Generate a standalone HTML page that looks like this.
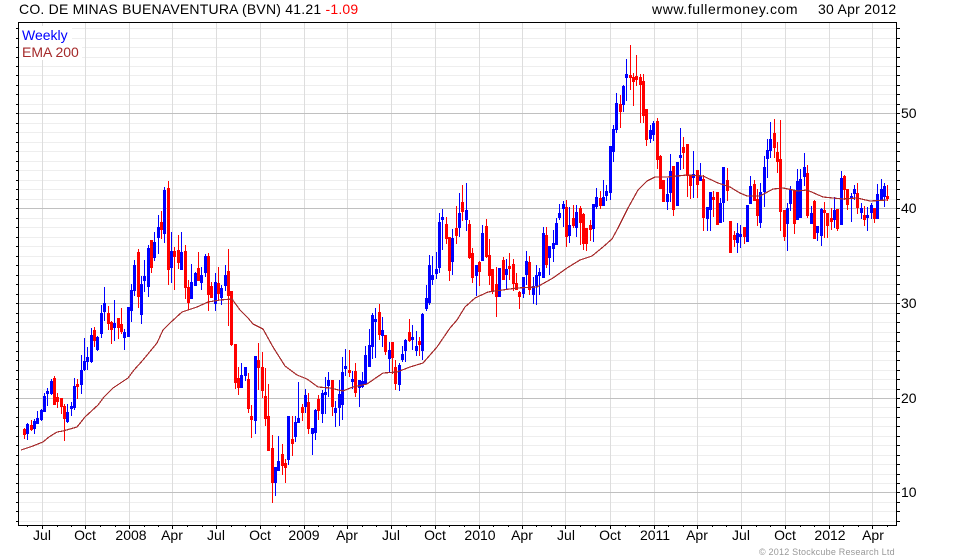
<!DOCTYPE html>
<html><head><meta charset="utf-8"><title>BVN chart</title>
<style>html,body{margin:0;padding:0;background:#fff}svg{display:block}text{font-family:"Liberation Sans",sans-serif;font-size:14px;fill:#000}</style>
</head><body>
<svg width="980" height="560" viewBox="0 0 980 560" xmlns="http://www.w3.org/2000/svg">
<g shape-rendering="crispEdges" fill="none">
<path stroke="#eeeeee" d="M19 28.5H896M19 38.5H896M19 47.5H896M19 57.5H896M19 66.5H896M19 75.5H896M19 85.5H896M19 94.5H896M19 104.5H896M19 123.5H896M19 132.5H896M19 142.5H896M19 151.5H896M19 161.5H896M19 170.5H896M19 180.5H896M19 189.5H896M19 199.5H896M19 218.5H896M19 227.5H896M19 237.5H896M19 246.5H896M19 256.5H896M19 265.5H896M19 275.5H896M19 284.5H896M19 294.5H896M19 313.5H896M19 322.5H896M19 332.5H896M19 341.5H896M19 351.5H896M19 360.5H896M19 370.5H896M19 379.5H896M19 389.5H896M19 407.5H896M19 417.5H896M19 426.5H896M19 436.5H896M19 445.5H896M19 455.5H896M19 464.5H896M19 474.5H896M19 483.5H896M19 502.5H896M19 511.5H896M19 521.5H896"/>
<path stroke="#dddddd" d="M42.5 23V525M85.5 23V525M129.5 23V525M172.5 23V525M216.5 23V525M260.5 23V525M304.5 23V525M347.5 23V525M391.5 23V525M435.5 23V525M479.5 23V525M522.5 23V525M565.5 23V525M610.5 23V525M654.5 23V525M697.5 23V525M741.5 23V525M785.5 23V525M829.5 23V525M872.5 23V525"/>
<path stroke="#c0c0c0" d="M19 113.5H896M19 208.5H896M19 303.5H896M19 398.5H896M19 492.5H896"/>
<rect x="20" y="26" width="52" height="17" fill="#fff"/>
<rect x="20" y="43" width="62" height="17" fill="#fff"/>
<path stroke="#000" stroke-width="1" d="M16 28.5h3M16 38.5h3M16 47.5h3M16 57.5h3M16 66.5h3M16 75.5h3M16 85.5h3M16 94.5h3M16 104.5h3M16 113.5h3M16 123.5h3M16 132.5h3M16 142.5h3M16 151.5h3M16 161.5h3M16 170.5h3M16 180.5h3M16 189.5h3M16 199.5h3M16 208.5h3M16 218.5h3M16 227.5h3M16 237.5h3M16 246.5h3M16 256.5h3M16 265.5h3M16 275.5h3M16 284.5h3M16 294.5h3M16 303.5h3M16 313.5h3M16 322.5h3M16 332.5h3M16 341.5h3M16 351.5h3M16 360.5h3M16 370.5h3M16 379.5h3M16 389.5h3M16 398.5h3M16 407.5h3M16 417.5h3M16 426.5h3M16 436.5h3M16 445.5h3M16 455.5h3M16 464.5h3M16 474.5h3M16 483.5h3M16 492.5h3M16 502.5h3M16 511.5h3M16 521.5h3"/>
<path stroke="#000" stroke-width="1" d="M896 28.5h4M896 38.5h4M896 47.5h4M896 57.5h4M896 66.5h4M896 75.5h4M896 85.5h4M896 94.5h4M896 104.5h4M896 113.5h4M896 123.5h4M896 132.5h4M896 142.5h4M896 151.5h4M896 161.5h4M896 170.5h4M896 180.5h4M896 189.5h4M896 199.5h4M896 208.5h4M896 218.5h4M896 227.5h4M896 237.5h4M896 246.5h4M896 256.5h4M896 265.5h4M896 275.5h4M896 284.5h4M896 294.5h4M896 303.5h4M896 313.5h4M896 322.5h4M896 332.5h4M896 341.5h4M896 351.5h4M896 360.5h4M896 370.5h4M896 379.5h4M896 389.5h4M896 398.5h4M896 407.5h4M896 417.5h4M896 426.5h4M896 436.5h4M896 445.5h4M896 455.5h4M896 464.5h4M896 474.5h4M896 483.5h4M896 492.5h4M896 502.5h4M896 511.5h4M896 521.5h4"/>
<path stroke="#000" stroke-width="1" d="M42.5 525v4M85.5 525v4M129.5 525v4M172.5 525v4M216.5 525v4M260.5 525v4M304.5 525v4M347.5 525v4M391.5 525v4M435.5 525v4M479.5 525v4M522.5 525v4M565.5 525v4M610.5 525v4M654.5 525v4M697.5 525v4M741.5 525v4M785.5 525v4M829.5 525v4M872.5 525v4M27.5 525v2M57.5 525v2M71.5 525v2M100.5 525v2M115.5 525v2M144.5 525v2M158.5 525v2M187.5 525v2M202.5 525v2M231.5 525v2M245.5 525v2M275.5 525v2M289.5 525v2M318.5 525v2M333.5 525v2M362.5 525v2M376.5 525v2M406.5 525v2M420.5 525v2M449.5 525v2M464.5 525v2M493.5 525v2M508.5 525v2M536.5 525v2M551.5 525v2M580.5 525v2M595.5 525v2M625.5 525v2M639.5 525v2M668.5 525v2M683.5 525v2M712.5 525v2M726.5 525v2M756.5 525v2M770.5 525v2M800.5 525v2M814.5 525v2M843.5 525v2M858.5 525v2M887.5 525v2"/>
<path stroke="#000" stroke-width="1" d="M18.5 22.5H896.5V525.5H18.5Z"/>
<g transform="translate(.5 0)">
<path stroke="#0000ff" stroke-width="1" d="M27 423V440M34 419V434M37 411V424M41 409V421M44 393V412M47 388V406M51 379V395M67 404V423M71 402V416M74 378V410M81 355V394M84 338V371M87 347V370M91 328V363M97 336V351M101 305V338M104 287V321M114 300V341M124 329V350M128 307V337M131 284V322M134 260V296M141 276V324M144 260V292M148 245V297M154 232V261M158 215V254M164 187V243M171 232V283M181 232V270M191 264V299M195 272V286M201 267V290M205 254V277M215 273V311M221 285V305M225 265V291M241 363V388M245 367V381M255 356V434M275 467V496M278 436V471M288 416V465M295 416V442M298 382V423M305 389V413M312 428V455M315 409V440M322 390V423M325 377V414M328 372V397M335 401V427M339 380V426M342 357V420M345 349V376M352 371V389M359 380V407M362 372V388M365 346V385M369 329V367M372 313V359M375 308V358M382 317V347M389 342V373M399 363V391M402 346V362M405 339V362M412 325V350M416 331V356M422 313V360M426 285V311M429 255V305M432 256V285M436 252V279M439 213V273M442 209V250M452 229V275M459 193V237M466 183V231M476 265V296M482 225V261M499 268V297M506 259V289M523 277V298M526 251V285M533 277V304M536 265V305M539 268V295M543 227V278M549 246V275M553 230V262M556 218V245M559 204V220M563 201V227M569 207V243M576 205V237M593 204V242M596 188V209M603 180V206M606 185V201M610 146V200M613 125V162M616 93V133M623 85V112M626 59V101M650 125V143M653 121V141M667 178V210M670 154V202M677 162V206M680 128V170M693 151V198M700 163V181M707 207V231M710 192V231M720 198V223M723 167V222M737 223V253M740 225V248M747 205V242M750 176V204M760 183V228M764 156V207M767 139V178M770 122V158M787 203V251M790 186V211M797 169V220M800 169V218M804 153V186M811 206V224M817 226V241M821 208V246M834 197V228M841 171V225M851 193V222M854 185V200M861 203V219M867 207V231M871 203V219M877 184V219M881 179V200M884 183V207"/>
<path stroke="#0000ff" stroke-width="3" d="M27 424V434M34 421V429M37 418V424M41 410V420M44 396V412M47 391V394M51 381V394M67 412V422M71 406V409M74 386V408M81 370V385M84 361V370M87 357V362M91 335V362M97 337V350M101 313V334M104 303V312M114 323V328M124 332V338M128 307V337M131 290V311M134 265V291M141 284V315M144 276V281M148 248V287M154 242V258M158 227V238M164 190V234M171 251V268M181 252V270M191 282V299M195 273V286M201 275V283M205 256V273M215 282V304M221 288V298M225 275V286M241 375V388M245 367V376M255 356V421M275 467V483M278 461V471M288 416V460M295 422V437M298 418V423M305 395V407M312 428V434M315 410V433M322 393V414M325 392V395M328 380V386M335 408V413M339 394V408M342 372V405M345 366V369M352 379V382M359 380V388M362 381V387M365 355V384M369 345V367M372 315V347M375 319V322M382 330V336M389 350V359M399 365V385M402 354V360M405 340V351M412 337V340M416 346V351M422 314V351M426 298V309M429 265V303M432 275V280M436 269V274M439 222V268M442 217V220M452 238V262M459 213V228M466 210V220M476 265V276M482 233V261M499 268V297M506 269V275M523 277V294M526 261V275M533 286V295M536 275V286M539 272V276M543 233V278M549 246V258M553 243V249M556 223V245M559 213V218M563 204V209M569 225V236M576 212V228M593 204V229M596 197V207M603 197V206M606 191V196M610 146V193M613 129V152M616 103V130M623 86V105M626 74V78M650 130V139M653 123V135M667 194V202M670 171V193M677 162V206M680 155V158M693 174V178M700 176V181M707 207V219M710 192V210M720 203V223M723 167V203M737 233V243M740 234V237M747 205V242M750 186V204M760 192V223M764 167V192M767 150V159M770 139V151M787 208V224M790 190V204M797 181V220M800 179V218M804 167V177M811 213V224M817 226V233M821 209V236M834 210V220M841 178V225M851 196V199M854 189V194M861 208V213M867 215V218M871 205V213M877 194V219M881 189V200M884 186V197"/>
<path stroke="#ff0000" stroke-width="1" d="M24 428V439M31 420V431M54 376V405M57 393V408M61 398V414M64 404V441M77 379V399M94 327V347M108 306V330M111 321V344M118 318V339M121 308V334M138 249V308M151 240V273M161 211V239M168 181V285M174 247V290M178 235V269M185 245V299M188 280V310M198 252V281M208 253V311M211 282V298M218 267V300M228 249V326M231 291V346M235 344V389M238 367V395M248 373V413M251 405V438M258 343V390M262 352V398M265 368V426M268 384V451M272 435V503M282 444V475M285 459V483M292 416V456M302 404V421M308 393V434M318 395V420M332 380V416M349 350V377M355 363V397M379 304V340M385 335V355M392 342V374M395 360V390M409 319V342M419 337V356M446 217V244M449 237V281M456 206V244M462 185V221M469 220V259M472 248V283M479 261V286M486 219V258M489 239V285M492 269V294M496 267V317M503 257V280M509 253V280M513 259V291M516 273V290M519 291V309M529 256V295M546 227V268M566 200V247M573 205V228M580 206V245M583 213V250M586 228V251M590 220V241M600 191V209M620 95V128M630 45V90M633 73V106M636 55V86M640 74V123M643 74V123M646 109V146M657 118V169M660 155V189M663 180V202M673 166V216M683 137V169M687 144V197M690 175V199M697 170V198M703 175V231M713 191V217M717 192V225M727 168V201M730 221V253M734 231V247M744 227V244M754 180V201M757 189V226M774 119V158M777 142V173M780 120V231M784 210V241M794 190V234M807 165V218M814 200V239M824 202V238M827 213V238M831 208V230M837 209V231M844 175V200M847 189V210M857 183V214M864 206V226M874 208V223M887 185V201"/>
<path stroke="#ff0000" stroke-width="3" d="M24 429V435M31 425V430M54 378V405M57 397V402M61 398V407M64 406V419M77 384V387M94 330V341M108 313V324M111 322V330M118 318V328M121 324V332M138 252V297M151 240V268M161 222V230M168 188V270M174 251V257M178 250V263M185 251V288M188 287V303M198 268V281M208 256V295M211 286V298M218 283V294M228 271V296M231 291V345M235 344V383M238 378V388M248 379V409M251 416V420M258 360V368M262 367V391M265 396V419M268 416V451M272 448V483M282 454V466M285 463V468M292 439V444M302 407V413M308 402V429M318 399V411M332 380V407M349 370V373M355 371V393M379 312V335M385 335V352M392 342V358M395 367V384M409 332V341M419 341V345M446 224V239M449 237V271M456 228V236M462 202V212M469 224V258M472 253V278M479 262V272M486 226V257M489 255V276M492 269V291M496 284V297M503 260V280M509 266V269M513 264V284M516 283V290M519 292V297M529 262V290M546 235V265M566 207V237M573 218V226M580 208V223M583 214V244M586 228V244M590 225V230M600 198V206M620 104V112M630 75V78M633 77V82M636 76V80M640 77V85M643 81V116M646 109V140M657 121V160M660 156V189M663 180V202M673 166V210M683 147V153M687 144V176M690 175V186M697 170V185M703 179V218M713 197V200M717 192V225M727 180V191M730 221V253M734 235V240M744 227V237M754 184V201M757 199V216M774 133V148M777 152V162M780 159V212M784 210V237M794 190V224M807 173V216M814 201V239M824 210V213M827 213V226M831 218V222M837 209V229M844 176V190M847 189V205M857 193V208M864 215V220M874 208V219M887 196V199"/>
</g>
<path stroke="#a52a2a" stroke-width="1.2" d="M21 450 33 446 43 442 49 437 57 432 63 431 77 427 85 417 98 405 104 397 113 388 128 378 134 370 143 360 157 343 163 330 170 323 182 312 197 307 208 302 220 300 232 299 240 310 248 318 253 324 263 329 273 347 285 366 297 375 307 379 318 387 330 388 343 391 353 387 367 384 383 373 397 372 410 367 423 363 437 347 450 328 457 320 465 307 475 298 488 292 517 288 537 287 553 278 567 268 580 260 592 256 603 247 612 239 618 228 628 208 638 190 647 181 655 177 667 177 687 175 703 176 718 183 730 187 740 193 747 196 760 196 773 189 783 188 798 191 807 190 823 197 843 199 857 198 870 201 887 200"/>
</g>
<text x="19" y="14" style="letter-spacing:.21px">CO. DE MINAS BUENAVENTURA (BVN) 41.21 <tspan style="fill:#ff0000">-1.09</tspan></text>
<text x="652" y="14" style="letter-spacing:.58px">www.fullermoney.com</text>
<text x="818" y="14" style="letter-spacing:.27px">30 Apr 2012</text>
<text x="22" y="40" style="fill:#0000ff">Weekly</text>
<text x="22" y="57" style="fill:#a52a2a">EMA 200</text>
<g><text x="901" y="118">50</text><text x="901" y="213">40</text><text x="901" y="308">30</text><text x="901" y="403">20</text><text x="901" y="497">10</text></g>
<g text-anchor="middle"><text x="42" y="540">Jul</text><text x="85" y="540">Oct</text><text x="131" y="540">2008</text><text x="172" y="540">Apr</text><text x="216" y="540">Jul</text><text x="260" y="540">Oct</text><text x="304" y="540">2009</text><text x="347" y="540">Apr</text><text x="391" y="540">Jul</text><text x="435" y="540">Oct</text><text x="480" y="540">2010</text><text x="522" y="540">Apr</text><text x="566" y="540">Jul</text><text x="610" y="540">Oct</text><text x="655" y="540">2011</text><text x="697" y="540">Apr</text><text x="741" y="540">Jul</text><text x="785" y="540">Oct</text><text x="830" y="540">2012</text><text x="873" y="540">Apr</text></g>
<text x="759" y="555" style="font-size:9px;fill:#999999;letter-spacing:.21px">© 2012 Stockcube Research Ltd</text>
</svg>
</body></html>
